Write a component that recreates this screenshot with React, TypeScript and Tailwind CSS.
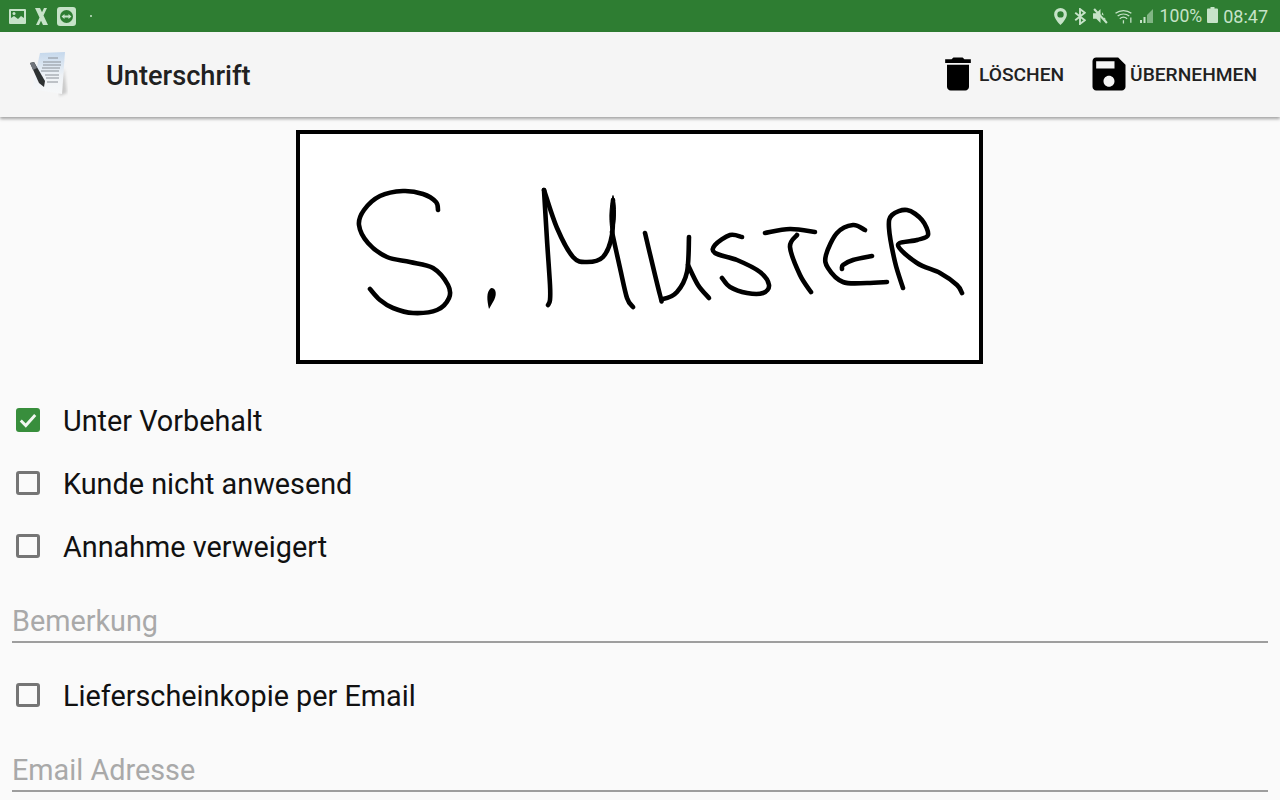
const font = { fontFamily: "Roboto, sans-serif" }

// signature strokes, in page coordinates
const strokes: [number, number][][] = [
    [[438, 210], [436, 202], [423, 194], [403, 191], [380, 196], [364, 210], [359, 225], [368, 243], [387, 257], [410, 262], [433, 268], [448, 285], [449, 298], [437, 310], [413, 313], [393, 308], [380, 300], [370, 289]],
    [[544, 190], [547, 240], [550, 285], [550, 300], [548, 305]],
    [[544, 190], [557, 228], [573, 257], [587, 262], [603, 257], [612, 235], [613, 200]],
    [[612, 232], [620, 268], [627, 298], [633, 307]],
    [[645, 233], [660, 295], [663, 299], [677, 292], [687, 272], [689, 237]],
    [[688, 265], [698, 285], [709, 298]],
    [[742, 237], [730, 235], [715, 245], [715, 253], [737, 260], [760, 272], [769, 285], [763, 293], [747, 293], [730, 287], [722, 278]],
    [[765, 233], [790, 229], [815, 232]],
    [[797, 235], [790, 247], [800, 275], [811, 292]],
    [[865, 230], [853, 225], [837, 233], [826, 255], [828, 268], [843, 282], [867, 283], [887, 282]],
    [[872, 256], [853, 260], [843, 265], [842, 269]],
    [[903, 288], [895, 262], [889, 228], [892, 215], [907, 210], [922, 220], [928, 235], [917, 240], [898, 245], [917, 263], [940, 273], [957, 285], [962, 293]],
]

function smooth(p: [number, number][]) {
    let d = `M${p[0][0]} ${p[0][1]}`
    for (let i = 0; i < p.length - 1; i++) {
        const a = p[Math.max(i - 1, 0)]
        const b = p[i]
        const c = p[i + 1]
        const e = p[Math.min(i + 2, p.length - 1)]
        d += ` C${b[0] + (c[0] - a[0]) / 6} ${b[1] + (c[1] - a[1]) / 6} ${c[0] - (e[0] - b[0]) / 6} ${c[1] - (e[1] - b[1]) / 6} ${c[0]} ${c[1]}`
    }
    return d
}

function StatusBar() {
    const tint = "#c6e3c8"
    return (
        <div className="h-8 bg-[#2e7d32] flex items-center justify-between text-[#c6e3c8]" style={font}>
            <div className="flex items-center pl-[9px]">
                <svg width="17" height="15" viewBox="0 0 17 15">
                    <path fillRule="evenodd" fill={tint} d="M1 0h15a1 1 0 0 1 1 1v13a1 1 0 0 1-1 1H1a1 1 0 0 1-1-1V1a1 1 0 0 1 1-1zM2 2v7l3-2 4 3 3-3 3 2V2z" />
                    <circle cx="5" cy="4.500" r="1.500" fill={tint} />
                </svg>
                <svg className="ml-[9px]" width="13" height="17" viewBox="0 0 13 17">
                    <path d="M0 0h5l8 17H8zM9 0h3L4 17H1z" fill={tint} />
                </svg>
                <svg className="ml-[9px]" width="19" height="19" viewBox="0 0 19 19">
                    <rect width="19" height="19" rx="3" fill={tint} />
                    <circle cx="9.500" cy="9.500" r="6.500" fill="#2e7d32" />
                    <path d="M4.500 9.500l3-2.500v1.500h4V7l3 2.500-3 2.500v-1.500h-4V12z" fill={tint} />
                </svg>
                <div className="ml-[14px] w-[2px] h-[2px] rounded-full bg-[#c6e3c8]"></div>
            </div>
            <div className="flex items-center pr-[12px]">
                <svg width="13" height="17" viewBox="0 0 12 16">
                    <path fillRule="evenodd" fill={tint} d="M6 0a6 6 0 0 1 6 6c0 4-6 10-6 10S0 10 0 6a6 6 0 0 1 6-6zm0 3a3 3 0 1 0 0 6 3 3 0 0 0 0-6z" />
                </svg>
                <svg className="ml-[7px]" width="12" height="17" viewBox="0 0 11 16" fill="none" stroke={tint} strokeWidth="1.800">
                    <path d="M1 4.500l9 7-4.500 3.500V1L10 4.500l-9 7" />
                </svg>
                <svg className="ml-[7px]" width="15" height="16" viewBox="0 0 14 15">
                    <path d="M0 5h3l4-4v13l-4-4H0z" fill={tint} />
                    <path d="M9 4l-1 2 2 1zM11 9l1 2-2-1z" fill={tint} />
                    <path d="M1 1l12 13" stroke={tint} strokeWidth="2" />
                </svg>
                <svg className="ml-[7px]" width="19" height="16" viewBox="0 0 18 15" fill="none" stroke={tint}>
                    <path d="M0.500 5a12 12 0 0 1 15 0M2.500 7.500a9 9 0 0 1 11 0M4.500 10a5.500 5.500 0 0 1 7 0" strokeWidth="1.200" />
                    <path d="M8 11.500v3M15 9v5" strokeWidth="1.200" />
                </svg>
                <svg className="ml-[6px]" width="13" height="14" viewBox="0 0 13 14">
                    <rect x="0" y="11" width="2" height="3" fill={tint} />
                    <rect x="3.500" y="8" width="2" height="6" fill={tint} />
                    <path d="M7 6l6-6v14H7z" fill={tint} opacity="0.550" />
                </svg>
                <span className="ml-[7px] mt-[2px] text-[17.6px] leading-none">100%</span>
                <svg className="ml-[5px] mb-[2px]" width="11" height="16" viewBox="0 0 11 16">
                    <path d="M3.500 0h4v1.500H10a1 1 0 0 1 1 1V15a1 1 0 0 1-1 1H1a1 1 0 0 1-1-1V2.500a1 1 0 0 1 1-1h2.500z" fill={tint} />
                </svg>
                <span className="ml-[5px] mt-[2px] text-[18px] leading-none">08:47</span>
            </div>
        </div>
    )
}

function DocIcon() {
    return (
        <svg width="44" height="46" viewBox="0 0 44 46">
            <defs>
                <linearGradient id="sheet" x1="0" y1="0" x2="0" y2="1">
                    <stop offset="0" stopColor="#c5d8ec" />
                    <stop offset="0.550" stopColor="#eef2f6" />
                    <stop offset="1" stopColor="#f7f8f9" />
                </linearGradient>
                <filter id="soft"><feGaussianBlur stdDeviation="0.500" /></filter>
                <filter id="softer"><feGaussianBlur stdDeviation="1.500" /></filter>
            </defs>
            <path d="M38 16l3 25-8 3z" fill="#9e9e9e" opacity="0.500" filter="url(#softer)" />
            <g filter="url(#soft)">
                <path d="M14 1L39 0l-3 42L6 37z" fill="url(#sheet)" />
                <path d="M22 6h10M17 10h18M17 13h18M16 16h18M15 19h18M19 23h14M20 26h13M21 30h11" stroke="#8a9097" strokeWidth="1" />
                <path d="M4 11l4-1 11 19-1 6-5-4z" fill="#2e3033" />
                <path d="M4 11l4-1 3 6-4 2z" fill="#70757b" />
            </g>
        </svg>
    )
}

function AppBar() {
    return (
        <div className="relative h-[85px] bg-[#f5f5f5] shadow-[0_2px_3px_rgba(0,0,0,0.35)] flex items-center" style={font}>
            <div className="ml-[26px] w-[44px]">
                <DocIcon />
            </div>
            <h1 className="ml-[36px] mt-[4px] text-[27.2px] font-medium text-[#212121]">Unterschrift</h1>
            <div className="ml-auto mb-[2px] flex items-center pr-[23px] text-[19.2px] font-medium text-[#212121]">
                <svg width="44" height="44" viewBox="0 0 24 24" fill="#000">
                    <path d="M6 19c0 1.100.9 2 2 2h8c1.100 0 2-.9 2-2V7H6v12zM19 4h-3.500l-1-1h-5l-1 1H5v2h14V4z" />
                </svg>
                <span className="ml-[-1px] mt-[4px]">LÖSCHEN</span>
                <svg className="ml-[23px] mr-[-1px]" width="44" height="44" viewBox="0 0 24 24" fill="#000">
                    <path d="M17 3H5c-1.110 0-2 .9-2 2v14c0 1.100.89 2 2 2h14c1.100 0 2-.9 2-2V7l-4-4zm-5 16c-1.660 0-3-1.340-3-3s1.340-3 3-3 3 1.340 3 3-1.340 3-3 3zm3-10H5V5h10v4z" />
                </svg>
                <span className="mt-[4px]">ÜBERNEHMEN</span>
            </div>
        </div>
    )
}

function CheckRow({ label, checked }: { label: string; checked?: boolean }) {
    return (
        <div className="h-[63px] flex items-center pl-[4px]">
            <div className="mb-[2px]">
                {checked ? (
                    <div className="w-6 h-6 rounded-[3px] bg-[#388e3c] flex items-center justify-center">
                        <svg width="20" height="20" viewBox="0 0 18 18" fill="none" stroke="#f1f8f1" strokeWidth="2.600">
                            <path d="M2.500 9.500l4.500 4.500 8.500-9.500" />
                        </svg>
                    </div>
                ) : (
                    <div className="w-6 h-6 rounded-[3px] border-[3px] border-[#757575]"></div>
                )}
            </div>
            <span className="ml-[23px] mt-[2px] text-[28.8px] text-[#111]">{label}</span>
        </div>
    )
}

function TextField({ placeholder }: { placeholder: string }) {
    return (
        <div className="h-[65px] flex flex-col justify-end">
            <div className="text-[28.8px] leading-[36px] text-[#a9a9a9] mb-[2px]">{placeholder}</div>
            <div className="h-[2px] bg-[#9e9e9e]"></div>
        </div>
    )
}

export default function App() {
    return (
        <div className="h-[800px] overflow-hidden bg-[#fafafa]">
            <StatusBar />
            <AppBar />
            <div className="flex justify-center mt-[13px] pr-px">
                <div className="w-[687px] h-[234px] border-4 border-black bg-white">
                    <svg width="679" height="226" viewBox="300 134 679 226" fill="none" stroke="#000" strokeWidth="4.600" strokeLinecap="round" strokeLinejoin="round">
                        {strokes.map((s, i) => (
                            <path key={i} d={smooth(s)} />
                        ))}
                        <path d="M491 288C497 288 497 296 493 302L489 309C487 300 486 292 491 288z" fill="#000" stroke="none" />
                        <path d="M613 196C617 205 616 225 612 234C609 225 609 205 613 196z" fill="#000" stroke="#000" strokeWidth="1" />
                    </svg>
                </div>
            </div>
            <div className="px-3 mt-[25px]" style={font}>
                <CheckRow label="Unter Vorbehalt" checked />
                <CheckRow label="Kunde nicht anwesend" />
                <CheckRow label="Annahme verweigert" />
                <TextField placeholder="Bemerkung" />
                <div className="mt-[21px]">
                    <CheckRow label="Lieferscheinkopie per Email" />
                </div>
                <TextField placeholder="Email Adresse" />
            </div>
        </div>
    )
}
